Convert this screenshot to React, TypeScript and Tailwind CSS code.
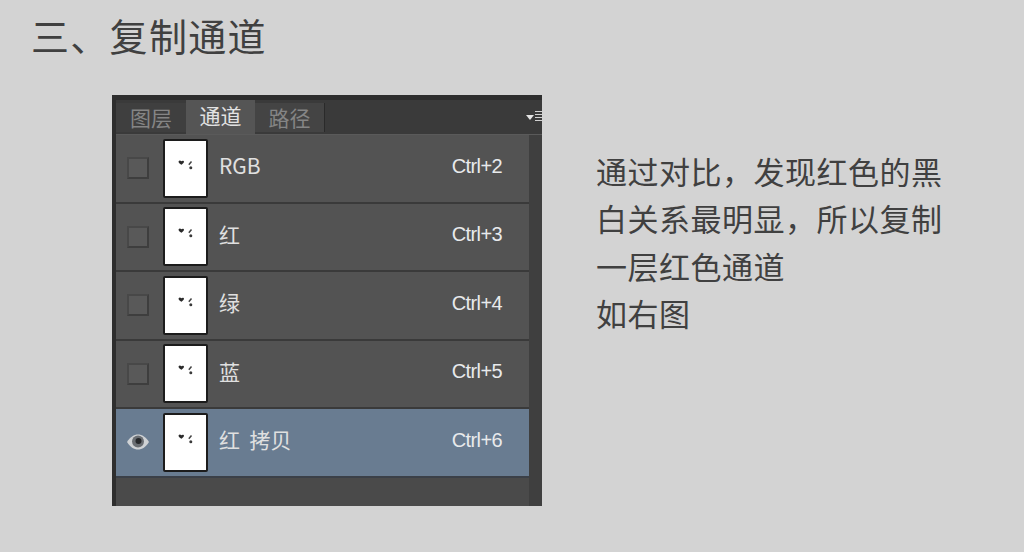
const cjk = "font-['Noto_Sans_CJK_SC','Liberation_Sans',sans-serif]"

const channels = [
  { name: "RGB", key: "Ctrl+2" },
  { name: "红", key: "Ctrl+3" },
  { name: "绿", key: "Ctrl+4" },
  { name: "蓝", key: "Ctrl+5" },
  { name: "红  拷贝", key: "Ctrl+6", active: true },
]

function Thumb() {
  return (
    <div className="flex h-[59px] w-[45px] shrink-0 items-center justify-center rounded-[2px] border-2 border-[#1c1c1c] bg-white">
      <svg width="16" height="12" viewBox="0 0 16 12" className="mb-[7px]">
        <path d="M.5 2.500C1.500 1 2.500 1.500 3.300 2.300 4 1.500 5.800 1.200 6 2.600c.1 1.200-1.500 2.300-2.400 3.200C2.500 5 .3 4 .5 2.500Z" fill="#2a2a2a" />
        <path d="M13.500 2.500 10.800 5.800" stroke="#444" strokeWidth="1.500" fill="none" />
        <circle cx="12.800" cy="8.800" r="1.500" fill="#3a3a3a" />
      </svg>
    </div>
  )
}

function Eye() {
  return (
    <svg width="24" height="18" viewBox="0 0 24 18">
      <path d="M1 9c3-5 7-7.500 11-7.500S20 4 23 9c-3 5-7 7.500-11 7.500S4 14 1 9Z" fill="#cfd2d5" />
      <circle cx="12" cy="8.500" r="6" fill="#6a6e73" />
      <circle cx="12.500" cy="8" r="3" fill="#26282b" />
    </svg>
  )
}

function ChannelRow({ name, shortcut, active }: { name: string; shortcut: string; active?: boolean }) {
  return (
    <div
      className={`flex h-[68.5px] items-center border-b-2 pr-[27px] ${
        active ? "border-[#3b4048] bg-[#697c91]" : "border-[#3a3a3a] bg-[#535353]"
      }`}
    >
      <div className="flex w-[47px] shrink-0 items-center justify-center pr-[3px]">
        {active ? (
          <Eye />
        ) : (
          <div className="h-[22px] w-[22px] border-2 border-b-[#3e3e3e] border-l-[#484848] border-r-[#3e3e3e] border-t-[#484848] bg-[#595959]" />
        )}
      </div>
      <Thumb />
      <span className={`mb-[5px] ml-[11px] whitespace-pre text-[21px] leading-none text-[#e0e0e0] ${cjk}`}>{name}</span>
      <span className="mb-[5px] ml-auto font-['Liberation_Sans',sans-serif] text-[20px] leading-none tracking-[-0.6px] text-[#e8eaec]">
        {shortcut}
      </span>
    </div>
  )
}

export default function App() {
  return (
    <div className={`h-[552px] w-[1024px] overflow-hidden bg-[#d3d3d3] ${cjk}`}>
      <h1 className="pl-[31px] pt-[8px] text-[38px] leading-[54px] font-normal tracking-[1.300px] text-[#404040]">三、复制通道</h1>
      <div className="mt-[33px] flex items-start">
        <div className="ml-[112px] h-[411px] w-[430px] shrink-0 border-t-[5px] border-l-[4px] border-[#2e2e2e] bg-[#4a4a4a]">
          <div className="flex h-[34px] items-end bg-[#3a3a3a]">
            <div className="mb-[2px] flex h-[29px] w-[70px] items-center justify-center bg-[#3f3f3f] text-[21px] text-[#858585]">图层</div>
            <div className="flex h-[34px] w-[69px] items-center justify-center bg-[#555555] pb-[2px] text-[21px] text-[#e2e2e2]">通道</div>
            <div className="mb-[2px] flex h-[29px] w-[70px] items-center justify-center border-r border-[#2a2a2a] bg-[#444444] text-[21px] text-[#858585]">路径</div>
            <div className="mb-[11px] ml-auto flex items-center gap-[1px]">
              <div className="h-0 w-0 border-x-[4px] border-t-[5px] border-x-transparent border-t-[#e4e4e4]" />
              <div className="h-[12px] w-[7px] bg-[repeating-linear-gradient(#d0d0d0_0_1px,#3a3a3a_1px_3px)]" />
            </div>
          </div>
          <div className="flex border-t border-[#5a5a5a]">
            <div className="w-[413px] shrink-0">
              {channels.map((c) => (
                <ChannelRow key={c.key} name={c.name} shortcut={c.key} active={c.active} />
              ))}
            </div>
            <div className="h-[371px] flex-1 bg-[#3f3f3f]" />
          </div>
        </div>
        <p className="ml-[54px] mt-[51.500px] w-[370px] text-[31px] leading-[47.500px] tracking-[0.5px] text-[#404040]">
          通过对比，发现红色的黑
          <br />
          白关系最明显，所以复制
          <br />
          一层红色通道
          <br />
          如右图
        </p>
      </div>
    </div>
  )
}
